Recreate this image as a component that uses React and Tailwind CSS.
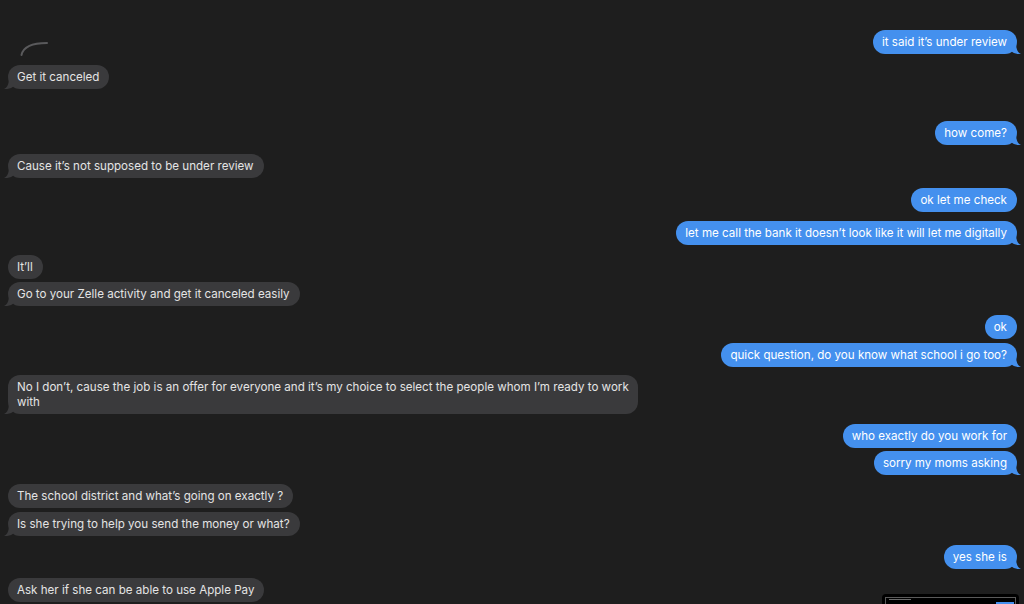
import React from 'react';

const messages = [
  { side: 'r', mt: 'mt-0', text: 'it said it’s under review', tail: true },
  { side: 'l', mt: 'mt-[11px]', text: 'Get it canceled', tail: true, arc: true },
  { side: 'r', mt: 'mt-[32px]', text: 'how come?', tail: true },
  { side: 'l', mt: 'mt-[9px]', text: 'Cause it’s not supposed to be under review', tail: true },
  { side: 'r', mt: 'mt-[10px]', text: 'ok let me check' },
  { side: 'r', mt: 'mt-[9px]', text: 'let me call the bank it doesn’t look like it will let me digitally', tail: true },
  { side: 'l', mt: 'mt-[10px]', text: 'It’ll' },
  { side: 'l', mt: 'mt-[3px]', text: 'Go to your Zelle activity and get it canceled easily', tail: true },
  { side: 'r', mt: 'mt-[9px]', text: 'ok' },
  { side: 'r', mt: 'mt-[4px]', text: 'quick question, do you know what school i go too?', tail: true },
  {
    side: 'l',
    mt: 'mt-[8px]',
    lines: ['No I don’t, cause the job is an offer for everyone and it’s my choice to select the people whom I’m ready to work', 'with'],
    tail: true,
    wide: true,
  },
  { side: 'r', mt: 'mt-[10px]', text: 'who exactly do you work for' },
  { side: 'r', mt: 'mt-[3px]', text: 'sorry my moms asking', tail: true },
  { side: 'l', mt: 'mt-[9px]', text: 'The school district and what’s going on exactly ?' },
  { side: 'l', mt: 'mt-[4px]', text: 'Is she trying to help you send the money or what?', tail: true },
  { side: 'r', mt: 'mt-[9px]', text: 'yes she is', tail: true },
  { side: 'l', mt: 'mt-[9px]', text: 'Ask her if she can be able to use Apple Pay' },
];

function Tail({ side }) {
  if (side === 'r') {
    return (
      <svg className="absolute right-[-4px] bottom-0" width="10" height="12" viewBox="0 0 10 12">
        <path d="M0 0 H5 C5 6 6 10 10 12 C6 12.5 2 11 0 9 Z" fill="#4490ee" />
      </svg>
    );
  }
  return (
    <svg className="absolute left-[-4px] bottom-0" width="10" height="12" viewBox="0 0 10 12">
      <path d="M10 0 H5 C5 6 4 10 0 12 C4 12.5 8 11 10 9 Z" fill="#3a3a3c" />
    </svg>
  );
}

function Bubble({ msg }) {
  const mine = msg.side === 'r';
  return (
    <div className={`flex ${mine ? 'justify-end' : 'justify-start'} ${msg.mt}`}>
      <div
        className={`relative rounded-[12px] pl-[9px] pr-[10px] py-[4.5px] text-[11.6px] leading-[15px] whitespace-nowrap ${
          mine ? 'bg-[#4490ee] text-white' : 'bg-[#3a3a3c] text-[#e4e4e4]'
        } ${msg.wide ? 'w-[630px]' : ''}`}
      >
        {msg.arc && (
          <svg className="absolute left-[12px] top-[-25px]" width="30" height="18" viewBox="0 0 30 18">
            <path d="M1.5 15 Q4 3 27 3" fill="none" stroke="#5a5a5c" strokeWidth="2" strokeLinecap="round" />
          </svg>
        )}
        {msg.lines ? (
          msg.lines.map((l, i) => (
            <div key={i} className="relative">
              {l}
            </div>
          ))
        ) : (
          <span className="relative">{msg.text}</span>
        )}
        {msg.tail && <Tail side={msg.side} />}
      </div>
    </div>
  );
}

export default function App() {
  return (
    <div
      className="relative h-[604px] w-[1024px] overflow-hidden bg-[#1e1e1e] pl-[8px] pr-[7px] pt-[30px]"
      style={{ fontFamily: 'Inter, "Liberation Sans", sans-serif' }}
    >
      {messages.map((m, i) => (
        <Bubble key={i} msg={m} />
      ))}

      <div className="absolute left-[882px] top-[594px] h-[16px] w-[137px] rounded-t-[4px] bg-black p-[3px]">
        <div className="relative h-full w-full border-t border-l border-r border-[#5a5a5a]">
          <div className="ml-[3px] mt-[1px] h-[1px] w-[22px] bg-[#6a6a6a]" />
          <div className="absolute right-[1px] top-[4px] h-[6px] w-[18px] bg-[#4490ee]" />
        </div>
      </div>
    </div>
  );
}
